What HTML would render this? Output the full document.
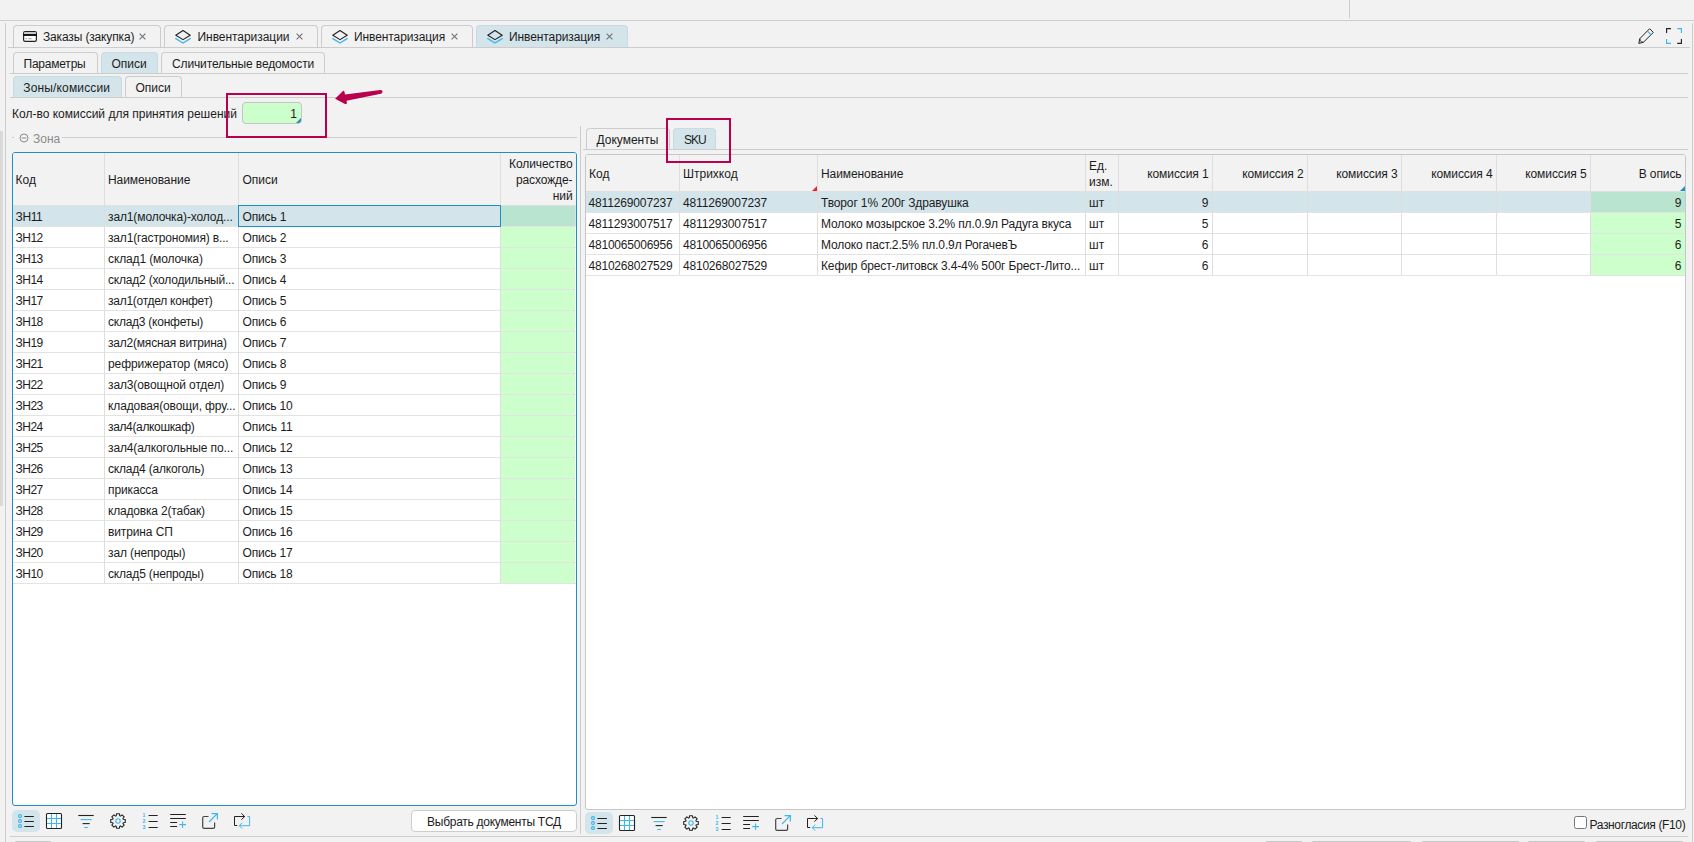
<!DOCTYPE html>
<html lang="ru"><head><meta charset="utf-8"><title>Инвентаризация</title><style>
html,body{margin:0;padding:0}
body{width:1694px;height:842px;background:#f2f2f2;position:relative;overflow:hidden;font:12px "Liberation Sans",sans-serif;color:#1c1c1c}
.a,.t{position:absolute;display:block}
svg{overflow:visible}
.t{white-space:nowrap;overflow:visible}
</style></head>
<body>
<div class="a" style="left:0px;top:20px;width:1694px;height:1px;background:#cccccc"></div>
<div class="a" style="left:1349px;top:0px;width:1px;height:18px;background:#cccccc"></div>
<div class="a" style="left:5px;top:23px;width:1px;height:819px;background:#cccccc"></div>
<div class="a" style="left:1692px;top:23px;width:1px;height:819px;background:#cccccc"></div>
<div class="a" style="left:0px;top:131px;width:3px;height:375px;background:#d9d9d9"></div>
<div class="a" style="left:8px;top:47px;width:1682px;height:1px;background:#cccccc"></div>
<div class="a" style="left:10px;top:73px;width:1678px;height:1px;background:#cccccc"></div>
<div class="a" style="left:10px;top:97px;width:1678px;height:1px;background:#cccccc"></div>
<div class="a" style="left:13px;top:25px;width:148px;height:22px;border:1px solid #cccccc;border-bottom:none;border-radius:4px 4px 0 0;box-sizing:border-box;"></div>
<div class="a" style="left:164px;top:25px;width:154px;height:22px;border:1px solid #cccccc;border-bottom:none;border-radius:4px 4px 0 0;box-sizing:border-box;"></div>
<div class="a" style="left:321px;top:25px;width:152px;height:22px;border:1px solid #cccccc;border-bottom:none;border-radius:4px 4px 0 0;box-sizing:border-box;"></div>
<div class="a" style="left:476px;top:25px;width:152px;height:22px;border:1px solid #cccccc;border-bottom:none;border-radius:4px 4px 0 0;box-sizing:border-box;background:#d3e4ea;border-color:#c9dae1;"></div>
<svg class="a" style="left:23px;top:31px" width="14" height="11" viewBox="0 0 14 11" fill="none"><rect x="0.6" y="0.6" width="12.8" height="9.8" rx="1.6" fill="#fff" stroke="#222" stroke-width="1.2"/><rect x="1.2" y="1.2" width="11.6" height="2" fill="#c9c9c9"/><rect x="0.6" y="3.1" width="12.8" height="1.8" fill="#000"/><rect x="2.6" y="7.2" width="1.6" height="1" fill="#9a8fb0"/><rect x="5.4" y="7.2" width="3.2" height="1" fill="#9a9aa8"/></svg>
<div class="t" style="left:43px;top:27px;width:100px;height:20px;line-height:20px;text-align:left;letter-spacing:-0.15px;"><span>Заказы (закупка)</span></div>
<svg class="a" style="left:175px;top:29px" width="16" height="16" viewBox="0 0 16 16" fill="none"><path d="M8 1.5 L15.2 6.3 L8 10.6 L0.8 6.3 Z" stroke="#222" stroke-width="1.1" stroke-linejoin="round"/><path d="M0.8 9.6 L8 14 L15.2 9.6" stroke="#3cb8ee" stroke-width="1.4" stroke-linecap="round" stroke-linejoin="round"/></svg>
<div class="t" style="left:197.5px;top:27px;width:100px;height:20px;line-height:20px;text-align:left;letter-spacing:-0.05px;"><span>Инвентаризации</span></div>
<svg class="a" style="left:332px;top:29px" width="16" height="16" viewBox="0 0 16 16" fill="none"><path d="M8 1.5 L15.2 6.3 L8 10.6 L0.8 6.3 Z" stroke="#222" stroke-width="1.1" stroke-linejoin="round"/><path d="M0.8 9.6 L8 14 L15.2 9.6" stroke="#3cb8ee" stroke-width="1.4" stroke-linecap="round" stroke-linejoin="round"/></svg>
<div class="t" style="left:354px;top:27px;width:100px;height:20px;line-height:20px;text-align:left;letter-spacing:-0.1px;"><span>Инвентаризация</span></div>
<svg class="a" style="left:487px;top:29px" width="16" height="16" viewBox="0 0 16 16" fill="none"><path d="M8 1.5 L15.2 6.3 L8 10.6 L0.8 6.3 Z" stroke="#222" stroke-width="1.1" stroke-linejoin="round"/><path d="M0.8 9.6 L8 14 L15.2 9.6" stroke="#3cb8ee" stroke-width="1.4" stroke-linecap="round" stroke-linejoin="round"/></svg>
<div class="t" style="left:509px;top:27px;width:100px;height:20px;line-height:20px;text-align:left;letter-spacing:-0.1px;"><span>Инвентаризация</span></div>
<svg class="a" style="left:138.5px;top:33.2px" width="7" height="7" viewBox="0 0 7 7" fill="none"><path d="M0.6 0.6L6.4 6.4M6.4 0.6L0.6 6.4" stroke="#707070" stroke-width="1.05"/></svg>
<svg class="a" style="left:295.5px;top:33.2px" width="7" height="7" viewBox="0 0 7 7" fill="none"><path d="M0.6 0.6L6.4 6.4M6.4 0.6L0.6 6.4" stroke="#707070" stroke-width="1.05"/></svg>
<svg class="a" style="left:451px;top:33.2px" width="7" height="7" viewBox="0 0 7 7" fill="none"><path d="M0.6 0.6L6.4 6.4M6.4 0.6L0.6 6.4" stroke="#707070" stroke-width="1.05"/></svg>
<svg class="a" style="left:606px;top:33.2px" width="7" height="7" viewBox="0 0 7 7" fill="none"><path d="M0.6 0.6L6.4 6.4M6.4 0.6L0.6 6.4" stroke="#707070" stroke-width="1.05"/></svg>
<svg class="a" style="left:1638px;top:28px" width="16" height="16" viewBox="0 0 16 16" fill="none"><path d="M11.6 0.7L15.3 4.4L5.4 14.3L0.8 15.4L1.9 10.6Z" stroke="#222" stroke-width="1" stroke-linejoin="round"/><path d="M1.9 10.6Q1.6 14 5.4 14.3" stroke="#222" stroke-width="0.9"/><path d="M9.3 3L13 6.7" stroke="#3cb8ee" stroke-width="1.1"/></svg>
<svg class="a" style="left:1666px;top:28px" width="16" height="16" viewBox="0 0 16 16" fill="none"><path d="M0.6 5V0.6H5M11.2 15.4H15.4V11" stroke="#222" stroke-width="1.15"/><path d="M11.2 0.6H15.4V5M0.6 11V15.4H5" stroke="#3cb8ee" stroke-width="1.15"/></svg>
<div class="a" style="left:13px;top:52px;width:85px;height:21px;border:1px solid #cccccc;border-bottom:none;border-radius:4px 4px 0 0;box-sizing:border-box;"></div>
<div class="a" style="left:101px;top:52px;width:57px;height:21px;border:1px solid #cccccc;border-bottom:none;border-radius:4px 4px 0 0;box-sizing:border-box;background:#d3e4ea;border-color:#c9dae1;"></div>
<div class="a" style="left:161px;top:52px;width:164px;height:21px;border:1px solid #cccccc;border-bottom:none;border-radius:4px 4px 0 0;box-sizing:border-box;"></div>
<div class="t" style="left:23.5px;top:54px;width:80px;height:20px;line-height:20px;text-align:left;letter-spacing:-0.22px;"><span>Параметры</span></div>
<div class="t" style="left:111.5px;top:54px;width:60px;height:20px;line-height:20px;text-align:left;"><span>Описи</span></div>
<div class="t" style="left:172px;top:54px;width:160px;height:20px;line-height:20px;text-align:left;letter-spacing:-0.13px;"><span>Сличительные ведомости</span></div>
<div class="a" style="left:13px;top:76px;width:109px;height:21px;border:1px solid #cccccc;border-bottom:none;border-radius:4px 4px 0 0;box-sizing:border-box;background:#d3e4ea;border-color:#c9dae1;"></div>
<div class="a" style="left:125px;top:76px;width:57px;height:21px;border:1px solid #cccccc;border-bottom:none;border-radius:4px 4px 0 0;box-sizing:border-box;"></div>
<div class="t" style="left:23.3px;top:78px;width:100px;height:20px;line-height:20px;text-align:left;letter-spacing:0.15px;"><span>Зоны/комиссии</span></div>
<div class="t" style="left:135.5px;top:78px;width:60px;height:20px;line-height:20px;text-align:left;"><span>Описи</span></div>
<div class="t" style="left:12px;top:104px;width:240px;height:20px;line-height:20px;text-align:left;letter-spacing:0px;"><span>Кол-во комиссий для принятия решений</span></div>
<div class="a" style="left:242px;top:102px;width:60px;height:22px;background:#ccffcc;border:1px solid #c4c4c4;border-radius:4px;box-sizing:border-box;overflow:hidden"><svg class="a" style="right:0;bottom:0" width="5" height="5"><path d="M5 0V5H0Z" fill="#1c8fc5"/></svg></div>
<div class="t" style="left:250px;top:104px;width:47px;height:20px;line-height:20px;text-align:right;"><span>1</span></div>
<div class="a" style="left:12px;top:137px;width:2px;height:1px;background:#cccccc"></div>
<div class="a" style="left:62px;top:137px;width:515px;height:1px;background:#cccccc"></div>
<svg class="a" style="left:18.7px;top:132.8px" width="10" height="10" viewBox="0 0 10 10" fill="none"><circle cx="5" cy="5" r="4" stroke="#8e8e8e" stroke-width="1"/><path d="M2.7 5H7.3" stroke="#8e8e8e" stroke-width="1"/></svg>
<div class="t" style="left:33px;top:130px;width:40px;height:18px;line-height:18px;text-align:left;letter-spacing:0px;color:#8a8a8a;"><span>Зона</span></div>
<div class="a" style="left:12px;top:152px;width:565px;height:654px;background:#fff;border:1px solid #1c8fc5;border-radius:3px;box-sizing:border-box"></div>
<div class="a" style="left:13px;top:153px;width:563px;height:52px;background:#f2f2f2;border-radius:2px 2px 0 0"></div>
<div class="a" style="left:13px;top:205px;width:563px;height:21px;background:#d3e4ea"></div>
<div class="a" style="left:501px;top:205px;width:73.5px;height:378px;background:#ccffcc"></div>
<div class="a" style="left:501px;top:205px;width:73.5px;height:21px;background:#b9e4cf"></div>
<div class="a" style="left:13px;top:205px;width:563px;height:1px;background:#e0e0e0"></div>
<div class="a" style="left:13px;top:226px;width:563px;height:1px;background:#e3e3e3"></div>
<div class="a" style="left:13px;top:247px;width:563px;height:1px;background:#e3e3e3"></div>
<div class="a" style="left:13px;top:268px;width:563px;height:1px;background:#e3e3e3"></div>
<div class="a" style="left:13px;top:289px;width:563px;height:1px;background:#e3e3e3"></div>
<div class="a" style="left:13px;top:310px;width:563px;height:1px;background:#e3e3e3"></div>
<div class="a" style="left:13px;top:331px;width:563px;height:1px;background:#e3e3e3"></div>
<div class="a" style="left:13px;top:352px;width:563px;height:1px;background:#e3e3e3"></div>
<div class="a" style="left:13px;top:373px;width:563px;height:1px;background:#e3e3e3"></div>
<div class="a" style="left:13px;top:394px;width:563px;height:1px;background:#e3e3e3"></div>
<div class="a" style="left:13px;top:415px;width:563px;height:1px;background:#e3e3e3"></div>
<div class="a" style="left:13px;top:436px;width:563px;height:1px;background:#e3e3e3"></div>
<div class="a" style="left:13px;top:457px;width:563px;height:1px;background:#e3e3e3"></div>
<div class="a" style="left:13px;top:478px;width:563px;height:1px;background:#e3e3e3"></div>
<div class="a" style="left:13px;top:499px;width:563px;height:1px;background:#e3e3e3"></div>
<div class="a" style="left:13px;top:520px;width:563px;height:1px;background:#e3e3e3"></div>
<div class="a" style="left:13px;top:541px;width:563px;height:1px;background:#e3e3e3"></div>
<div class="a" style="left:13px;top:562px;width:563px;height:1px;background:#e3e3e3"></div>
<div class="a" style="left:13px;top:583px;width:563px;height:1px;background:#e3e3e3"></div>
<div class="a" style="left:104px;top:153px;width:1px;height:430px;background:#dedede"></div>
<div class="a" style="left:238px;top:153px;width:1px;height:430px;background:#dedede"></div>
<div class="a" style="left:500px;top:153px;width:1px;height:430px;background:#dedede"></div>
<div class="t" style="left:15.5px;top:170px;width:60px;height:20px;line-height:20px;text-align:left;"><span>Код</span></div>
<div class="t" style="left:108px;top:170px;width:100px;height:20px;line-height:20px;text-align:left;letter-spacing:-0.08px;"><span>Наименование</span></div>
<div class="t" style="left:242.5px;top:170px;width:100px;height:20px;line-height:20px;text-align:left;"><span>Описи</span></div>
<div class="t" style="left:502px;top:156px;width:70.5px;line-height:16px;text-align:right;white-space:normal;letter-spacing:-0.1px">Количество<br>расхожде-<br>ний</div>
<div class="t" style="left:15.5px;top:207px;width:80px;height:20px;line-height:20px;text-align:left;letter-spacing:-0.369px;"><span>ЗН11</span></div>
<div class="t" style="left:108px;top:207px;width:130px;height:20px;line-height:20px;text-align:left;letter-spacing:-0.12px;"><span>зал1(молочка)-холод...</span></div>
<div class="t" style="left:242.5px;top:207px;width:120px;height:20px;line-height:20px;text-align:left;letter-spacing:-0.157px;"><span>Опись 1</span></div>
<div class="t" style="left:15.5px;top:228px;width:80px;height:20px;line-height:20px;text-align:left;letter-spacing:-0.491px;"><span>ЗН12</span></div>
<div class="t" style="left:108px;top:228px;width:130px;height:20px;line-height:20px;text-align:left;letter-spacing:-0.156px;"><span>зал1(гастрономия) в...</span></div>
<div class="t" style="left:242.5px;top:228px;width:120px;height:20px;line-height:20px;text-align:left;letter-spacing:-0.157px;"><span>Опись 2</span></div>
<div class="t" style="left:15.5px;top:249px;width:80px;height:20px;line-height:20px;text-align:left;letter-spacing:-0.491px;"><span>ЗН13</span></div>
<div class="t" style="left:108px;top:249px;width:130px;height:20px;line-height:20px;text-align:left;letter-spacing:-0.12px;"><span>склад1 (молочка)</span></div>
<div class="t" style="left:242.5px;top:249px;width:120px;height:20px;line-height:20px;text-align:left;letter-spacing:-0.157px;"><span>Опись 3</span></div>
<div class="t" style="left:15.5px;top:270px;width:80px;height:20px;line-height:20px;text-align:left;letter-spacing:-0.491px;"><span>ЗН14</span></div>
<div class="t" style="left:108px;top:270px;width:130px;height:20px;line-height:20px;text-align:left;letter-spacing:-0.201px;"><span>склад2 (холодильный...</span></div>
<div class="t" style="left:242.5px;top:270px;width:120px;height:20px;line-height:20px;text-align:left;letter-spacing:-0.157px;"><span>Опись 4</span></div>
<div class="t" style="left:15.5px;top:291px;width:80px;height:20px;line-height:20px;text-align:left;letter-spacing:-0.491px;"><span>ЗН17</span></div>
<div class="t" style="left:108px;top:291px;width:130px;height:20px;line-height:20px;text-align:left;letter-spacing:-0.261px;"><span>зал1(отдел конфет)</span></div>
<div class="t" style="left:242.5px;top:291px;width:120px;height:20px;line-height:20px;text-align:left;letter-spacing:-0.157px;"><span>Опись 5</span></div>
<div class="t" style="left:15.5px;top:312px;width:80px;height:20px;line-height:20px;text-align:left;letter-spacing:-0.491px;"><span>ЗН18</span></div>
<div class="t" style="left:108px;top:312px;width:130px;height:20px;line-height:20px;text-align:left;letter-spacing:-0.246px;"><span>склад3 (конфеты)</span></div>
<div class="t" style="left:242.5px;top:312px;width:120px;height:20px;line-height:20px;text-align:left;letter-spacing:-0.157px;"><span>Опись 6</span></div>
<div class="t" style="left:15.5px;top:333px;width:80px;height:20px;line-height:20px;text-align:left;letter-spacing:-0.491px;"><span>ЗН19</span></div>
<div class="t" style="left:108px;top:333px;width:130px;height:20px;line-height:20px;text-align:left;letter-spacing:-0.209px;"><span>зал2(мясная витрина)</span></div>
<div class="t" style="left:242.5px;top:333px;width:120px;height:20px;line-height:20px;text-align:left;letter-spacing:-0.157px;"><span>Опись 7</span></div>
<div class="t" style="left:15.5px;top:354px;width:80px;height:20px;line-height:20px;text-align:left;letter-spacing:-0.491px;"><span>ЗН21</span></div>
<div class="t" style="left:108px;top:354px;width:130px;height:20px;line-height:20px;text-align:left;letter-spacing:-0.078px;"><span>рефрижератор (мясо)</span></div>
<div class="t" style="left:242.5px;top:354px;width:120px;height:20px;line-height:20px;text-align:left;letter-spacing:-0.157px;"><span>Опись 8</span></div>
<div class="t" style="left:15.5px;top:375px;width:80px;height:20px;line-height:20px;text-align:left;letter-spacing:-0.491px;"><span>ЗН22</span></div>
<div class="t" style="left:108px;top:375px;width:130px;height:20px;line-height:20px;text-align:left;letter-spacing:-0.12px;"><span>зал3(овощной отдел)</span></div>
<div class="t" style="left:242.5px;top:375px;width:120px;height:20px;line-height:20px;text-align:left;letter-spacing:-0.157px;"><span>Опись 9</span></div>
<div class="t" style="left:15.5px;top:396px;width:80px;height:20px;line-height:20px;text-align:left;letter-spacing:-0.491px;"><span>ЗН23</span></div>
<div class="t" style="left:108px;top:396px;width:130px;height:20px;line-height:20px;text-align:left;letter-spacing:-0.12px;"><span>кладовая(овощи, фру...</span></div>
<div class="t" style="left:242.5px;top:396px;width:120px;height:20px;line-height:20px;text-align:left;letter-spacing:-0.171px;"><span>Опись 10</span></div>
<div class="t" style="left:15.5px;top:417px;width:80px;height:20px;line-height:20px;text-align:left;letter-spacing:-0.491px;"><span>ЗН24</span></div>
<div class="t" style="left:108px;top:417px;width:130px;height:20px;line-height:20px;text-align:left;letter-spacing:-0.355px;"><span>зал4(алкошкаф)</span></div>
<div class="t" style="left:242.5px;top:417px;width:120px;height:20px;line-height:20px;text-align:left;letter-spacing:-0.06px;"><span>Опись 11</span></div>
<div class="t" style="left:15.5px;top:438px;width:80px;height:20px;line-height:20px;text-align:left;letter-spacing:-0.491px;"><span>ЗН25</span></div>
<div class="t" style="left:108px;top:438px;width:130px;height:20px;line-height:20px;text-align:left;letter-spacing:-0.12px;"><span>зал4(алкогольные по...</span></div>
<div class="t" style="left:242.5px;top:438px;width:120px;height:20px;line-height:20px;text-align:left;letter-spacing:-0.171px;"><span>Опись 12</span></div>
<div class="t" style="left:15.5px;top:459px;width:80px;height:20px;line-height:20px;text-align:left;letter-spacing:-0.491px;"><span>ЗН26</span></div>
<div class="t" style="left:108px;top:459px;width:130px;height:20px;line-height:20px;text-align:left;letter-spacing:-0.193px;"><span>склад4 (алкоголь)</span></div>
<div class="t" style="left:242.5px;top:459px;width:120px;height:20px;line-height:20px;text-align:left;letter-spacing:-0.171px;"><span>Опись 13</span></div>
<div class="t" style="left:15.5px;top:480px;width:80px;height:20px;line-height:20px;text-align:left;letter-spacing:-0.491px;"><span>ЗН27</span></div>
<div class="t" style="left:108px;top:480px;width:130px;height:20px;line-height:20px;text-align:left;letter-spacing:-0.12px;"><span>прикасса</span></div>
<div class="t" style="left:242.5px;top:480px;width:120px;height:20px;line-height:20px;text-align:left;letter-spacing:-0.171px;"><span>Опись 14</span></div>
<div class="t" style="left:15.5px;top:501px;width:80px;height:20px;line-height:20px;text-align:left;letter-spacing:-0.491px;"><span>ЗН28</span></div>
<div class="t" style="left:108px;top:501px;width:130px;height:20px;line-height:20px;text-align:left;letter-spacing:-0.18px;"><span>кладовка 2(табак)</span></div>
<div class="t" style="left:242.5px;top:501px;width:120px;height:20px;line-height:20px;text-align:left;letter-spacing:-0.171px;"><span>Опись 15</span></div>
<div class="t" style="left:15.5px;top:522px;width:80px;height:20px;line-height:20px;text-align:left;letter-spacing:-0.491px;"><span>ЗН29</span></div>
<div class="t" style="left:108px;top:522px;width:130px;height:20px;line-height:20px;text-align:left;letter-spacing:-0.12px;"><span>витрина СП</span></div>
<div class="t" style="left:242.5px;top:522px;width:120px;height:20px;line-height:20px;text-align:left;letter-spacing:-0.171px;"><span>Опись 16</span></div>
<div class="t" style="left:15.5px;top:543px;width:80px;height:20px;line-height:20px;text-align:left;letter-spacing:-0.491px;"><span>ЗН20</span></div>
<div class="t" style="left:108px;top:543px;width:130px;height:20px;line-height:20px;text-align:left;letter-spacing:-0.12px;"><span>зал (непроды)</span></div>
<div class="t" style="left:242.5px;top:543px;width:120px;height:20px;line-height:20px;text-align:left;letter-spacing:-0.171px;"><span>Опись 17</span></div>
<div class="t" style="left:15.5px;top:564px;width:80px;height:20px;line-height:20px;text-align:left;letter-spacing:-0.491px;"><span>ЗН10</span></div>
<div class="t" style="left:108px;top:564px;width:130px;height:20px;line-height:20px;text-align:left;letter-spacing:-0.174px;"><span>склад5 (непроды)</span></div>
<div class="t" style="left:242.5px;top:564px;width:120px;height:20px;line-height:20px;text-align:left;letter-spacing:-0.171px;"><span>Опись 18</span></div>
<div class="a" style="left:238px;top:205px;width:263px;height:22px;border:1px solid #1c8fc5;box-sizing:border-box"></div>
<div class="a" style="left:12px;top:810px;width:28px;height:22px;background:#d3e4ea;border-radius:5px"></div>
<svg class="a" style="left:18px;top:813px" width="16" height="16" viewBox="0 0 16 16" fill="none"><g stroke="#3cb8ee" stroke-width="1.15"><rect x="0.6" y="1.6" width="2.8" height="2.8" rx="1.1"/><rect x="0.6" y="6.6" width="2.8" height="2.8" rx="1.1"/><rect x="0.6" y="11.6" width="2.8" height="2.8" rx="1.1"/></g><path d="M6.4 3.5H15.9M6.4 8.5H15.9M6.4 13.5H15.9" stroke="#222" stroke-width="1"/></svg>
<svg class="a" style="left:46px;top:813px" width="16" height="16" viewBox="0 0 16 16" fill="none"><rect x="0.5" y="0.5" width="15" height="15" rx="1" fill="#fff" stroke="#222" stroke-width="1.1"/><path d="M5.5 1V15M10.5 1V15M1 5.5H15M1 10.5H15" stroke="#3cb8ee" stroke-width="1.1"/></svg>
<svg class="a" style="left:78px;top:813px" width="16" height="16" viewBox="0 0 16 16" fill="none"><path d="M0.3 2.5H15.7" stroke="#222" stroke-width="1.1"/><path d="M2.6 6.6H13.7" stroke="#3cb8ee" stroke-width="1.1"/><path d="M4.6 10.6H11.7" stroke="#222" stroke-width="1.1"/><path d="M6.3 14.5H9.8" stroke="#3cb8ee" stroke-width="1.1"/></svg>
<svg class="a" style="left:110px;top:813px" width="16" height="16" viewBox="0 0 16 16" fill="none"><path d="M6.53 0.75 L9.47 0.75 L9.73 2.78 L10.47 3.08 L12.09 1.83 L14.17 3.91 L12.92 5.53 L13.22 6.27 L15.25 6.53 L15.25 9.47 L13.22 9.73 L12.92 10.47 L14.17 12.09 L12.09 14.17 L10.47 12.92 L9.73 13.22 L9.47 15.25 L6.53 15.25 L6.27 13.22 L5.53 12.92 L3.91 14.17 L1.83 12.09 L3.08 10.47 L2.78 9.73 L0.75 9.47 L0.75 6.53 L2.78 6.27 L3.08 5.53 L1.83 3.91 L3.91 1.83 L5.53 3.08 L6.27 2.78Z" stroke="#222" stroke-width="1.1" stroke-linejoin="round"/><circle cx="8" cy="8" r="2.2" stroke="#3cb8ee" stroke-width="1.1"/></svg>
<svg class="a" style="left:142px;top:813px" width="16" height="16" viewBox="0 0 16 16" fill="none"><g fill="#3cb8ee" font-family="Liberation Sans,sans-serif" font-weight="bold" font-size="5.2"><text x="0.4" y="3.9">1</text><text x="0.4" y="10">2</text><text x="0.4" y="15.9">3</text></g><path d="M6.6 2.5H15.7M6.6 8.5H15.7M6.6 14.5H15.7" stroke="#222" stroke-width="1"/></svg>
<svg class="a" style="left:170px;top:813px" width="16" height="16" viewBox="0 0 16 16" fill="none"><path d="M0.2 1.5H15.8M0.2 5.5H15.8M0.2 9.5H7.1M0.2 13.5H7.1" stroke="#222" stroke-width="1"/><path d="M9.3 11.6H16M12.6 8.4V14.9" stroke="#3cb8ee" stroke-width="1.1"/></svg>
<svg class="a" style="left:202px;top:813px" width="16" height="16" viewBox="0 0 16 16" fill="none"><path d="M6.5 3.5H2.2Q0.7 3.5 0.7 5V14Q0.7 15.4 2.2 15.4H11.2Q12.6 15.4 12.6 14V9.6" stroke="#444" stroke-width="1.2"/><path d="M7 9L15.3 0.7M9.5 0.6H15.4V6.5" stroke="#3cb8ee" stroke-width="1.2"/></svg>
<svg class="a" style="left:234px;top:813px" width="16" height="16" viewBox="0 0 16 16" fill="none"><path d="M3.2 12.5H0.5V3.5H10.6M7.4 0.4L10.7 3.5L7.4 6.6" stroke="#222" stroke-width="1"/><path d="M13.4 3.5H15.6V12.7H5.4M8.2 9.7L5.3 12.7L8.2 15.6" stroke="#3cb8ee" stroke-width="1"/></svg>
<div class="a" style="left:411px;top:810px;width:166px;height:22px;background:#fff;border:1px solid #cccccc;border-radius:4px;box-sizing:border-box"></div>
<div class="t" style="left:411px;top:812px;width:166px;height:20px;line-height:20px;text-align:center;letter-spacing:-0.27px;"><span>Выбрать документы ТСД</span></div>
<div class="a" style="left:580px;top:126px;width:1px;height:708px;background:#cccccc"></div>
<div class="a" style="left:583px;top:149px;width:1105px;height:1px;background:#cccccc"></div>
<div class="a" style="left:586px;top:128px;width:84px;height:21px;border:1px solid #cccccc;border-bottom:none;border-radius:4px 4px 0 0;box-sizing:border-box;"></div>
<div class="a" style="left:673px;top:128px;width:43px;height:21px;border:1px solid #cccccc;border-bottom:none;border-radius:4px 4px 0 0;box-sizing:border-box;background:#d3e4ea;border-color:#c9dae1;"></div>
<div class="t" style="left:596.5px;top:130px;width:80px;height:20px;line-height:20px;text-align:left;"><span>Документы</span></div>
<div class="t" style="left:684px;top:130px;width:40px;height:20px;line-height:20px;text-align:left;letter-spacing:-1px;"><span>SKU</span></div>
<div class="a" style="left:585px;top:154px;width:1101px;height:656px;background:#fff;border:1px solid #c6c6c6;border-radius:3px;box-sizing:border-box"></div>
<div class="a" style="left:586px;top:155px;width:1099px;height:36px;background:#f2f2f2;border-radius:2px 2px 0 0"></div>
<div class="a" style="left:586px;top:191px;width:1099px;height:21px;background:#d3e4ea"></div>
<div class="a" style="left:1591px;top:191px;width:94px;height:84px;background:#ccffcc"></div>
<div class="a" style="left:1591px;top:191px;width:94px;height:21px;background:#b9e4cf"></div>
<div class="a" style="left:586px;top:191px;width:1099px;height:1px;background:#e0e0e0"></div>
<div class="a" style="left:586px;top:212px;width:1099px;height:1px;background:#e3e3e3"></div>
<div class="a" style="left:586px;top:233px;width:1099px;height:1px;background:#e3e3e3"></div>
<div class="a" style="left:586px;top:254px;width:1099px;height:1px;background:#e3e3e3"></div>
<div class="a" style="left:586px;top:275px;width:1099px;height:1px;background:#e3e3e3"></div>
<div class="a" style="left:679px;top:155px;width:1px;height:120px;background:#dedede"></div>
<div class="a" style="left:817px;top:155px;width:1px;height:120px;background:#dedede"></div>
<div class="a" style="left:1085px;top:155px;width:1px;height:120px;background:#dedede"></div>
<div class="a" style="left:1118px;top:155px;width:1px;height:120px;background:#dedede"></div>
<div class="a" style="left:1212px;top:155px;width:1px;height:120px;background:#dedede"></div>
<div class="a" style="left:1307px;top:155px;width:1px;height:120px;background:#dedede"></div>
<div class="a" style="left:1401px;top:155px;width:1px;height:120px;background:#dedede"></div>
<div class="a" style="left:1496px;top:155px;width:1px;height:120px;background:#dedede"></div>
<div class="a" style="left:1590px;top:155px;width:1px;height:120px;background:#dedede"></div>
<div class="t" style="left:589px;top:164px;width:60px;height:20px;line-height:20px;text-align:left;"><span>Код</span></div>
<div class="t" style="left:683px;top:164px;width:100px;height:20px;line-height:20px;text-align:left;"><span>Штрихкод</span></div>
<div class="t" style="left:821px;top:164px;width:100px;height:20px;line-height:20px;text-align:left;letter-spacing:-0.08px;"><span>Наименование</span></div>
<div class="t" style="left:1089px;top:158px;width:30px;line-height:16px;white-space:normal">Ед.<br>изм.</div>
<div class="t" style="left:1118.5px;top:164px;width:90px;height:20px;line-height:20px;text-align:right;letter-spacing:-0.1px;"><span>комиссия 1</span></div>
<div class="t" style="left:1213.5px;top:164px;width:90px;height:20px;line-height:20px;text-align:right;letter-spacing:-0.1px;"><span>комиссия 2</span></div>
<div class="t" style="left:1307.5px;top:164px;width:90px;height:20px;line-height:20px;text-align:right;letter-spacing:-0.1px;"><span>комиссия 3</span></div>
<div class="t" style="left:1402.5px;top:164px;width:90px;height:20px;line-height:20px;text-align:right;letter-spacing:-0.1px;"><span>комиссия 4</span></div>
<div class="t" style="left:1496.5px;top:164px;width:90px;height:20px;line-height:20px;text-align:right;letter-spacing:-0.1px;"><span>комиссия 5</span></div>
<div class="t" style="left:1591.5px;top:164px;width:90px;height:20px;line-height:20px;text-align:right;letter-spacing:-0.1px;"><span>В опись</span></div>
<svg class="a" style="left:812px;top:186px" width="5" height="5" viewBox="0 0 5 5" fill="none"><path d="M5 0V5H0Z" fill="#e8232d"/></svg>
<svg class="a" style="left:1680px;top:186px" width="5" height="5" viewBox="0 0 5 5" fill="none"><path d="M5 0V5H0Z" fill="#1c8fc5"/></svg>
<div class="t" style="left:588.5px;top:193px;width:92px;height:20px;line-height:20px;text-align:left;letter-spacing:-0.144px;"><span>4811269007237</span></div>
<div class="t" style="left:683px;top:193px;width:92px;height:20px;line-height:20px;text-align:left;letter-spacing:-0.144px;"><span>4811269007237</span></div>
<div class="t" style="left:821px;top:193px;width:266px;height:20px;line-height:20px;text-align:left;letter-spacing:-0.13px;"><span>Творог 1% 200г Здравушка</span></div>
<div class="t" style="left:1089px;top:193px;width:30px;height:20px;line-height:20px;text-align:left;"><span>шт</span></div>
<div class="t" style="left:1118px;top:193px;width:90.5px;height:20px;line-height:20px;text-align:right;"><span>9</span></div>
<div class="t" style="left:1591px;top:193px;width:90.5px;height:20px;line-height:20px;text-align:right;"><span>9</span></div>
<div class="t" style="left:588.5px;top:214px;width:92px;height:20px;line-height:20px;text-align:left;letter-spacing:-0.144px;"><span>4811293007517</span></div>
<div class="t" style="left:683px;top:214px;width:92px;height:20px;line-height:20px;text-align:left;letter-spacing:-0.144px;"><span>4811293007517</span></div>
<div class="t" style="left:821px;top:214px;width:266px;height:20px;line-height:20px;text-align:left;letter-spacing:-0.13px;"><span>Молоко мозырское 3.2% пл.0.9л Радуга вкуса</span></div>
<div class="t" style="left:1089px;top:214px;width:30px;height:20px;line-height:20px;text-align:left;"><span>шт</span></div>
<div class="t" style="left:1118px;top:214px;width:90.5px;height:20px;line-height:20px;text-align:right;"><span>5</span></div>
<div class="t" style="left:1591px;top:214px;width:90.5px;height:20px;line-height:20px;text-align:right;"><span>5</span></div>
<div class="t" style="left:588.5px;top:235px;width:92px;height:20px;line-height:20px;text-align:left;letter-spacing:-0.213px;"><span>4810065006956</span></div>
<div class="t" style="left:683px;top:235px;width:92px;height:20px;line-height:20px;text-align:left;letter-spacing:-0.213px;"><span>4810065006956</span></div>
<div class="t" style="left:821px;top:235px;width:266px;height:20px;line-height:20px;text-align:left;letter-spacing:-0.13px;"><span>Молоко паст.2.5% пл.0.9л РогачевЪ</span></div>
<div class="t" style="left:1089px;top:235px;width:30px;height:20px;line-height:20px;text-align:left;"><span>шт</span></div>
<div class="t" style="left:1118px;top:235px;width:90.5px;height:20px;line-height:20px;text-align:right;"><span>6</span></div>
<div class="t" style="left:1591px;top:235px;width:90.5px;height:20px;line-height:20px;text-align:right;"><span>6</span></div>
<div class="t" style="left:588.5px;top:256px;width:92px;height:20px;line-height:20px;text-align:left;letter-spacing:-0.213px;"><span>4810268027529</span></div>
<div class="t" style="left:683px;top:256px;width:92px;height:20px;line-height:20px;text-align:left;letter-spacing:-0.213px;"><span>4810268027529</span></div>
<div class="t" style="left:821px;top:256px;width:266px;height:20px;line-height:20px;text-align:left;letter-spacing:-0.13px;"><span>Кефир брест-литовск 3.4-4% 500г Брест-Лито...</span></div>
<div class="t" style="left:1089px;top:256px;width:30px;height:20px;line-height:20px;text-align:left;"><span>шт</span></div>
<div class="t" style="left:1118px;top:256px;width:90.5px;height:20px;line-height:20px;text-align:right;"><span>6</span></div>
<div class="t" style="left:1591px;top:256px;width:90.5px;height:20px;line-height:20px;text-align:right;"><span>6</span></div>
<div class="a" style="left:585px;top:812px;width:28px;height:22px;background:#d3e4ea;border-radius:5px"></div>
<svg class="a" style="left:591px;top:815px" width="16" height="16" viewBox="0 0 16 16" fill="none"><g stroke="#3cb8ee" stroke-width="1.15"><rect x="0.6" y="1.6" width="2.8" height="2.8" rx="1.1"/><rect x="0.6" y="6.6" width="2.8" height="2.8" rx="1.1"/><rect x="0.6" y="11.6" width="2.8" height="2.8" rx="1.1"/></g><path d="M6.4 3.5H15.9M6.4 8.5H15.9M6.4 13.5H15.9" stroke="#222" stroke-width="1"/></svg>
<svg class="a" style="left:619px;top:815px" width="16" height="16" viewBox="0 0 16 16" fill="none"><rect x="0.5" y="0.5" width="15" height="15" rx="1" fill="#fff" stroke="#222" stroke-width="1.1"/><path d="M5.5 1V15M10.5 1V15M1 5.5H15M1 10.5H15" stroke="#3cb8ee" stroke-width="1.1"/></svg>
<svg class="a" style="left:651px;top:815px" width="16" height="16" viewBox="0 0 16 16" fill="none"><path d="M0.3 2.5H15.7" stroke="#222" stroke-width="1.1"/><path d="M2.6 6.6H13.7" stroke="#3cb8ee" stroke-width="1.1"/><path d="M4.6 10.6H11.7" stroke="#222" stroke-width="1.1"/><path d="M6.3 14.5H9.8" stroke="#3cb8ee" stroke-width="1.1"/></svg>
<svg class="a" style="left:683px;top:815px" width="16" height="16" viewBox="0 0 16 16" fill="none"><path d="M6.53 0.75 L9.47 0.75 L9.73 2.78 L10.47 3.08 L12.09 1.83 L14.17 3.91 L12.92 5.53 L13.22 6.27 L15.25 6.53 L15.25 9.47 L13.22 9.73 L12.92 10.47 L14.17 12.09 L12.09 14.17 L10.47 12.92 L9.73 13.22 L9.47 15.25 L6.53 15.25 L6.27 13.22 L5.53 12.92 L3.91 14.17 L1.83 12.09 L3.08 10.47 L2.78 9.73 L0.75 9.47 L0.75 6.53 L2.78 6.27 L3.08 5.53 L1.83 3.91 L3.91 1.83 L5.53 3.08 L6.27 2.78Z" stroke="#222" stroke-width="1.1" stroke-linejoin="round"/><circle cx="8" cy="8" r="2.2" stroke="#3cb8ee" stroke-width="1.1"/></svg>
<svg class="a" style="left:715px;top:815px" width="16" height="16" viewBox="0 0 16 16" fill="none"><g fill="#3cb8ee" font-family="Liberation Sans,sans-serif" font-weight="bold" font-size="5.2"><text x="0.4" y="3.9">1</text><text x="0.4" y="10">2</text><text x="0.4" y="15.9">3</text></g><path d="M6.6 2.5H15.7M6.6 8.5H15.7M6.6 14.5H15.7" stroke="#222" stroke-width="1"/></svg>
<svg class="a" style="left:743px;top:815px" width="16" height="16" viewBox="0 0 16 16" fill="none"><path d="M0.2 1.5H15.8M0.2 5.5H15.8M0.2 9.5H7.1M0.2 13.5H7.1" stroke="#222" stroke-width="1"/><path d="M9.3 11.6H16M12.6 8.4V14.9" stroke="#3cb8ee" stroke-width="1.1"/></svg>
<svg class="a" style="left:775px;top:815px" width="16" height="16" viewBox="0 0 16 16" fill="none"><path d="M6.5 3.5H2.2Q0.7 3.5 0.7 5V14Q0.7 15.4 2.2 15.4H11.2Q12.6 15.4 12.6 14V9.6" stroke="#444" stroke-width="1.2"/><path d="M7 9L15.3 0.7M9.5 0.6H15.4V6.5" stroke="#3cb8ee" stroke-width="1.2"/></svg>
<svg class="a" style="left:807px;top:815px" width="16" height="16" viewBox="0 0 16 16" fill="none"><path d="M3.2 12.5H0.5V3.5H10.6M7.4 0.4L10.7 3.5L7.4 6.6" stroke="#222" stroke-width="1"/><path d="M13.4 3.5H15.6V12.7H5.4M8.2 9.7L5.3 12.7L8.2 15.6" stroke="#3cb8ee" stroke-width="1"/></svg>
<div class="a" style="left:1574px;top:816px;width:13px;height:13px;background:#fff;border:1px solid #767676;border-radius:2.5px;box-sizing:border-box"></div>
<div class="t" style="left:1589.5px;top:815px;width:110px;height:20px;line-height:20px;text-align:left;letter-spacing:-0.36px;"><span>Разногласия (F10)</span></div>
<div class="a" style="left:10px;top:836px;width:1678px;height:1px;background:#cccccc"></div>
<div class="a" style="left:14px;top:841px;width:38px;height:4px;background:#c6c6c6;border-radius:3px 3px 0 0"></div>
<div class="a" style="left:1265px;top:841px;width:38px;height:4px;background:#c6c6c6;border-radius:3px 3px 0 0"></div>
<div class="a" style="left:1311px;top:841px;width:101px;height:4px;background:#c6c6c6;border-radius:3px 3px 0 0"></div>
<div class="a" style="left:1421px;top:841px;width:99px;height:4px;background:#c6c6c6;border-radius:3px 3px 0 0"></div>
<div class="a" style="left:1527px;top:841px;width:59px;height:4px;background:#c6c6c6;border-radius:3px 3px 0 0"></div>
<div class="a" style="left:1595px;top:841px;width:89px;height:4px;background:#c6c6c6;border-radius:3px 3px 0 0"></div>
<div class="a" style="left:226px;top:93px;width:101px;height:45px;border:2px solid #b8004f;box-sizing:border-box"></div>
<div class="a" style="left:666px;top:118px;width:65px;height:45px;border:2px solid #b8004f;box-sizing:border-box"></div>
<svg class="a" style="left:330px;top:85px" width="60" height="25" viewBox="0 0 60 25" fill="none"><path d="M5.1 13.7L13 6Q14 5.3 14.4 6.5L15 9.4L50.4 5.1Q52.9 5.2 52.4 7Q52.2 8.4 50.8 8.8L16.5 15.8L17 18Q16.6 19.5 15 19Z" fill="#b8004f"/></svg>
</body></html>
